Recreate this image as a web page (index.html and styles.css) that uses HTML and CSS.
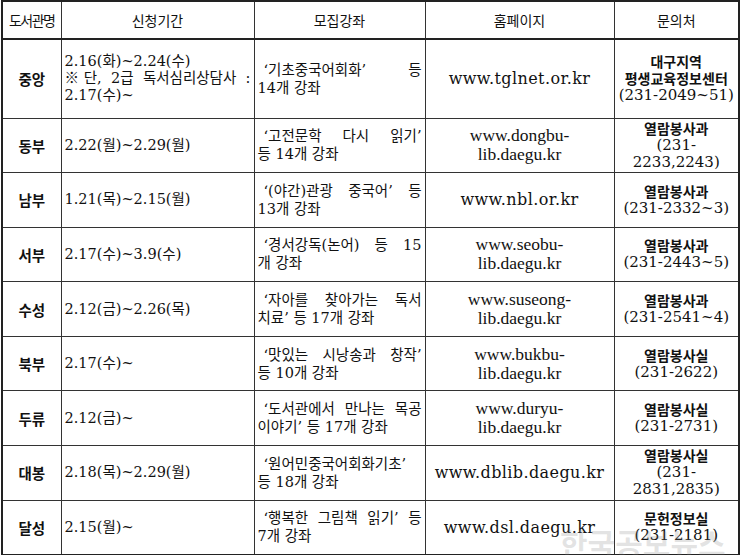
FILE: index.html
```html
<!DOCTYPE html>
<html lang="ko">
<head>
<meta charset="utf-8">
<title>도서관 강좌 안내</title>
<link rel="stylesheet" href="styles.css">
</head>
<body>
<table class="tbl">
<colgroup><col class="c1"><col class="c2"><col class="c3"><col class="c4"><col class="c5"></colgroup>
<thead>
<tr class="hd"><th class="tight">도서관명</th><th>신청기간</th><th>모집강좌</th><th>홈페이지</th><th>문의처</th></tr>
</thead>
<tbody>
<tr class="rt">
<td class="lib">중앙</td>
<td class="date"><span class="ln">2.16(화)~2.24(수)</span><span class="ln j">※단, 2급 독서심리상담사 :</span><span class="ln">2.17(수)~</span></td>
<td class="course"><span class="ln j q">‘기초중국어회화’ 등</span><span class="ln">14개 강좌</span></td>
<td class="url wide">www.tglnet.or.kr</td>
<td class="contact"><span class="ko">대구지역</span><span class="ko">평생교육정보센터</span><span class="ph">(231-2049~51)</span></td>
</tr>
<tr class="r">
<td class="lib">동부</td>
<td class="date">2.22(월)~2.29(월)</td>
<td class="course"><span class="ln j q">‘고전문학 다시 읽기’</span><span class="ln">등 14개 강좌</span></td>
<td class="url thin">www.dongbu-<br>lib.daegu.kr</td>
<td class="contact"><span class="ko">열람봉사과</span><span class="ph">(231-</span><span class="ph">2233,2243)</span></td>
</tr>
<tr class="r">
<td class="lib">남부</td>
<td class="date">1.21(목)~2.15(월)</td>
<td class="course"><span class="ln j q">‘(야간)관광 중국어’ 등</span><span class="ln">13개 강좌</span></td>
<td class="url wide">www.nbl.or.kr</td>
<td class="contact"><span class="ko">열람봉사과</span><span class="ph">(231-2332~3)</span></td>
</tr>
<tr class="r">
<td class="lib">서부</td>
<td class="date">2.17(수)~3.9(수)</td>
<td class="course"><span class="ln j q">‘경서강독(논어) 등 15</span><span class="ln">개 강좌</span></td>
<td class="url thin">www.seobu-<br>lib.daegu.kr</td>
<td class="contact"><span class="ko">열람봉사과</span><span class="ph">(231-2443~5)</span></td>
</tr>
<tr class="r">
<td class="lib">수성</td>
<td class="date">2.12(금)~2.26(목)</td>
<td class="course"><span class="ln j q">‘자아를 찾아가는 독서</span><span class="ln">치료’ 등 17개 강좌</span></td>
<td class="url thin">www.suseong-<br>lib.daegu.kr</td>
<td class="contact"><span class="ko">열람봉사과</span><span class="ph">(231-2541~4)</span></td>
</tr>
<tr class="r">
<td class="lib">북부</td>
<td class="date">2.17(수)~</td>
<td class="course"><span class="ln j q">‘맛있는 시낭송과 창작’</span><span class="ln">등 10개 강좌</span></td>
<td class="url thin">www.bukbu-<br>lib.daegu.kr</td>
<td class="contact"><span class="ko">열람봉사실</span><span class="ph">(231-2622)</span></td>
</tr>
<tr class="r">
<td class="lib">두류</td>
<td class="date">2.12(금)~</td>
<td class="course"><span class="ln j q">‘도서관에서 만나는 목공</span><span class="ln">이야기’ 등 17개 강좌</span></td>
<td class="url thin">www.duryu-<br>lib.daegu.kr</td>
<td class="contact"><span class="ko">열람봉사실</span><span class="ph">(231-2731)</span></td>
</tr>
<tr class="r">
<td class="lib">대봉</td>
<td class="date">2.18(목)~2.29(월)</td>
<td class="course"><span class="ln j q">‘원어민중국어회화기초’</span><span class="ln">등 18개 강좌</span></td>
<td class="url wide">www.dblib.daegu.kr</td>
<td class="contact"><span class="ko">열람봉사실</span><span class="ph">(231-</span><span class="ph">2831,2835)</span></td>
</tr>
<tr class="r">
<td class="lib">달성</td>
<td class="date">2.15(월)~</td>
<td class="course"><span class="ln j q">‘행복한 그림책 읽기’ 등</span><span class="ln">7개 강좌</span></td>
<td class="url wide">www.dsl.daegu.kr</td>
<td class="contact"><span class="ko">문헌정보실</span><span class="ph">(231-2181)</span></td>
</tr>
</tbody>
</table>
<div class="wm">한국공보뉴스</div>
</body>
</html>
```

FILE: styles.css
```css
* { box-sizing: border-box; }
html, body { margin: 0; padding: 0; background: #fff; }
body {
  font-family: "DejaVu Serif", "Noto Sans CJK KR", serif;
  font-size: 14.5px;
  color: #111;
  width: 740px;
  height: 555px;
  overflow: hidden;
  position: relative;
}
.tbl {
  border-collapse: collapse;
  table-layout: fixed;
  width: 737px;
  margin-left: 1px;
  border: 2px solid #222;
}
.c1 { width: 59px; }
.c2 { width: 193px; }
.c3 { width: 171px; }
.c4 { width: 189px; }
.c5 { width: 125px; }
.tbl th, .tbl td {
  border: 1px solid #333;
  padding: 0 3px;
  vertical-align: middle;
  overflow: hidden;
}
.tbl th {
  font-family: "Noto Sans CJK KR", sans-serif;
  font-weight: normal;
  font-size: 14px;
  text-align: center;
}
.hd { height: 38px; }
.hd th { border-bottom: 2px solid #222; }
.tight { letter-spacing: -1.5px; }
.rt { height: 79px; }
.r { height: 54.6px; }
.lib {
  text-align: center;
  font-family: "Noto Sans CJK KR", sans-serif;
  font-weight: 700;
}
.date { line-height: 17px; padding-left: 2px; }
.ln { display: block; }
.j { text-align: justify; text-align-last: justify; }
.course { line-height: 18px; padding-left: 4px; padding-right: 3px; }
.q { text-indent: 6px; }
.url { text-align: center; line-height: 19px; }
.wide { font-size: 16px; letter-spacing: 0.4px; }
.thin { font-family: "Liberation Serif", "Noto Sans CJK KR", serif; font-size: 17.5px; }
.contact { text-align: center; line-height: 17px; padding: 0 1px; }
.ko {
  display: block;
  font-family: "Noto Sans CJK KR", sans-serif;
  font-weight: 700;
  font-size: 14px;
}
.ph { display: block; font-size: 15px; white-space: nowrap; }
.wm {
  position: absolute;
  left: 560px;
  top: 520px;
  font-family: "Noto Sans CJK KR", sans-serif;
  font-weight: 700;
  font-size: 30px;
  color: rgba(130, 130, 130, 0.22);
  white-space: nowrap;
}
```
